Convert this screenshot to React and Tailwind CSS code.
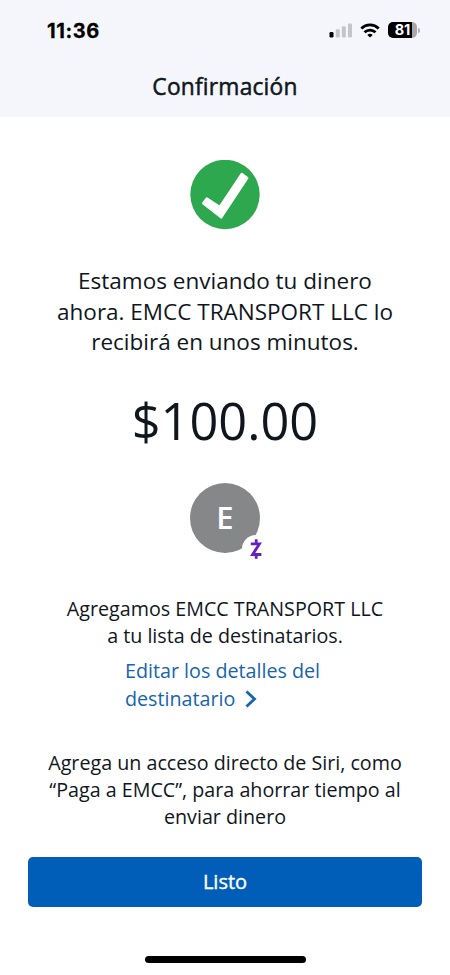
import { clsx } from 'clsx';

/**
 * StatusBar Component
 * Clock on the left, signal, wifi and battery on the right
 */
function StatusBar() {
    return (
        <div className="flex items-center justify-between h-[60px] pl-[47px] pr-[30px]">
            <span className="pt-px font-['Inter'] text-[20px] leading-6 font-bold tracking-[0.6px] text-black [-webkit-text-stroke:0.3px]">11:36</span>

            <div className="flex items-center">
                {/* Signal */}
                <svg width="24" height="15" viewBox="0 0 24 15">
                    <rect x="0.5" y="9" width="4" height="5.5" rx="1.2" fill="#000" />
                    <rect x="6.8" y="6.2" width="4" height="8.3" rx="1.2" fill="#c4c5c8" />
                    <rect x="12.8" y="3.2" width="4" height="11.3" rx="1.2" fill="#c4c5c8" />
                    <rect x="19" y="0.5" width="4" height="14" rx="1.2" fill="#c4c5c8" />
                </svg>

                {/* Wifi */}
                <svg className="ml-[7px]" width="20" height="15" viewBox="0 0 20 15" fill="none" stroke="#000" strokeWidth="2.8">
                    <path d="M1.3 5.4a12.6 12.6 0 0 1 17.4 0" />
                    <path d="M4.5 9.3a8 8 0 0 1 11 0" />
                    <path d="M10 14.5l-2.7-2.6a4.1 4.1 0 0 1 5.4 0z" fill="#000" stroke="none" />
                </svg>

                {/* Battery */}
                <div className="ml-2 flex items-center">
                    <div className="flex items-center justify-center w-[29px] h-4 rounded-[5px] bg-linear-to-r from-black from-82% to-[#a8a8ab] to-82%">
                        <span className="font-['Inter'] text-[14.5px] leading-4 font-bold text-white">81</span>
                    </div>
                    <div className="ml-px w-[2px] h-[5px] rounded-r-full bg-[#b0b0b3]" />
                </div>
            </div>
        </div>
    );
}

function SuccessIcon() {
    return (
        <svg className="block mx-auto" width="70" height="70" viewBox="0 0 70 70">
            <circle cx="35" cy="34.5" r="34.7" fill="#2ea84f" />
            <path
                d="M13.2 43.2l3.6-4.6 13 8.4 22-33 5.4 4-26 39.4z"
                fill="#fff"
                stroke="#fff"
                strokeWidth="2.4"
                strokeLinejoin="round"
            />
        </svg>
    );
}

/**
 * Avatar Component
 * Recipient initial with the Zelle badge over its lower right edge
 */
function Avatar({ initial }) {
    return (
        <div className="relative flex items-center justify-center mx-auto w-[70px] h-[70px] rounded-full bg-[#858789]">
            <span className="text-[31px] leading-none font-semibold text-white">{initial}</span>
            <div className="absolute left-[52px] top-[52px] flex items-center justify-center w-7 h-7 rounded-full bg-white">
                <svg width="12" height="20" viewBox="0 0 12 20" fill="none" stroke="#6420c4" strokeWidth="2.8">
                    <path d="M0.8 4.9h8.6L2.6 15.5h8.8" />
                    <path d="M6.2 0.2v4M6.2 15.8v4" />
                </svg>
            </div>
        </div>
    );
}

function Lines({ lines, className }) {
    return (
        <p className={clsx('text-center whitespace-nowrap', className)}>
            {lines.map((line) => (
                <span key={line} className="block">{line}</span>
            ))}
        </p>
    );
}

export default function App() {
    return (
        <div className="flex flex-col w-full h-[975px] overflow-hidden bg-white font-['Open_Sans','Noto_Sans',sans-serif] text-[#10161d]">
            <header className="shrink-0 h-[117px] bg-[#f5f6fb]">
                <StatusBar />
                <h1 className="mt-3 text-center text-[22.8px] leading-[30px] tracking-[0.2px] [-webkit-text-stroke:0.5px]">Confirmación</h1>
            </header>

            <main className="flex flex-col pt-[43px]">
                <SuccessIcon />

                <Lines
                    className="mt-9 text-[22.5px] leading-[30.5px]"
                    lines={['Estamos enviando tu dinero', 'ahora. EMCC TRANSPORT LLC lo', 'recibirá en unos minutos.']}
                />

                <div className="mt-[33px] text-center text-[50.5px] leading-[60px]">$100.00</div>

                <div className="mt-[32px]">
                    <Avatar initial="E" />
                </div>

                <Lines
                    className="mt-[42px] text-[19.7px] leading-[27px]"
                    lines={['Agregamos EMCC TRANSPORT LLC', 'a tu lista de destinatarios.']}
                />

                {/* Edit recipient link */}
                <a className="mt-[8px] ml-[125px] text-[19.7px] leading-7 text-[#1664ad] whitespace-nowrap">
                    <span className="block">Editar los detalles del</span>
                    <span className="flex items-center">
                        destinatario
                        <svg className="ml-[10px]" width="12" height="18" viewBox="0 0 12 18" fill="none" stroke="#1664ad" strokeWidth="2.8">
                            <path d="M1.5 1.5L9.5 9l-8 7.5" />
                        </svg>
                    </span>
                </a>

                <Lines
                    className="mt-[36px] text-[19.7px] leading-[27px]"
                    lines={['Agrega un acceso directo de Siri, como', '“Paga a EMCC”, para ahorrar tiempo al', 'enviar dinero']}
                />
            </main>

            <footer className="flex flex-col items-center pt-[27px] px-7">
                <button className="w-full h-[50px] pt-px rounded-[5px] bg-[#005eb8] text-[20px] text-white [-webkit-text-stroke:0.4px]">
                    Listo
                </button>
                <div className="mt-[49px] w-[161px] h-[7px] rounded-full bg-black" />
            </footer>
        </div>
    );
}
